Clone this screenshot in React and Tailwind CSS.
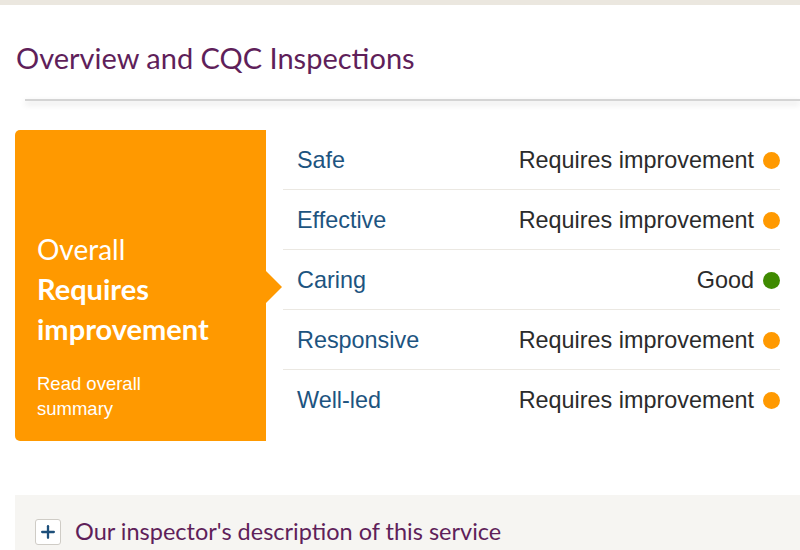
import { Plus } from 'lucide-react'

const RATINGS = [
  { key: 'Safe', value: 'Requires improvement', tone: 'amber' },
  { key: 'Effective', value: 'Requires improvement', tone: 'amber' },
  { key: 'Caring', value: 'Good', tone: 'green' },
  { key: 'Responsive', value: 'Requires improvement', tone: 'amber' },
  { key: 'Well-led', value: 'Requires improvement', tone: 'amber' },
]

function Dot({ tone }) {
  return (
    <span
      className={`inline-block h-[17px] w-[17px] rounded-full ${
        tone === 'green' ? 'bg-[#3f8a00]' : 'bg-[#ff9900]'
      }`}
    />
  )
}

export default function App() {
  return (
    <div className="h-[550px] w-[800px] overflow-hidden bg-white">
      <div className="h-[5px] bg-[#ebe7df]" />

      {/* Heading */}
      <div className="px-4 pt-[34px]">
        <h1 className="font-['Lato',sans-serif] text-[29px] leading-[38px] text-[#5f1f5a]">
          Overview and CQC Inspections
        </h1>
      </div>
      <div className="ml-[25px] mt-[22px] h-[2px] bg-[#d4d4d4] shadow-[0_3px_6px_rgba(0,0,0,0.18)]" />

      {/* Ratings */}
      <div className="mt-[29px] flex pl-[15px] pr-5">
        <div className="relative flex h-[311px] w-[251px] flex-col justify-end rounded-l-[5px] bg-[#ff9900] px-[22px] pb-[20px]">
          <p className="font-['Lato',sans-serif] text-[28px] leading-[40px] text-white">Overall</p>
          <p className="font-['Lato',sans-serif] text-[29px] font-bold leading-[40px] text-white">
            Requires
            <br />
            improvement
          </p>
          <p className="mt-[22px] font-['Liberation_Sans',sans-serif] text-[18.5px] leading-[25px] text-white">
            Read overall
            <br />
            summary
          </p>
          <span className="absolute right-[-16px] top-[141px] h-0 w-0 border-y-[16px] border-l-[16px] border-y-transparent border-l-[#ff9900]" />
        </div>

        <ul className="ml-[17px] flex-1 font-['Liberation_Sans',sans-serif] text-[23.4px]">
          {RATINGS.map((r, i) => (
            <li
              key={r.key}
              className={`flex h-[60px] items-center justify-between pl-[14px] pt-[2px] ${
                i < RATINGS.length - 1 ? 'border-b border-[#ebe8e2]' : ''
              }`}
            >
              <span className="text-[#1d5480]">{r.key}</span>
              <span className="flex items-center gap-[9px] text-[#2b2b2b]">
                {r.value}
                <Dot tone={r.tone} />
              </span>
            </li>
          ))}
        </ul>
      </div>

      {/* Accordion */}
      <div className="ml-[15px] mt-[54px] flex h-[60px] items-center gap-[14px] bg-[#f6f5f2] px-5 pt-[13px]">
        <span className="flex h-[26px] w-[26px] items-center justify-center rounded-[3px] border border-[#cfccc6] bg-white">
          <Plus className="h-[20px] w-[20px] text-[#1d4f7a]" strokeWidth={2.75} />
        </span>
        <span className="font-['Lato',sans-serif] text-[23.5px] text-[#5f1f5a]">
          Our inspector's description of this service
        </span>
      </div>
    </div>
  )
}
